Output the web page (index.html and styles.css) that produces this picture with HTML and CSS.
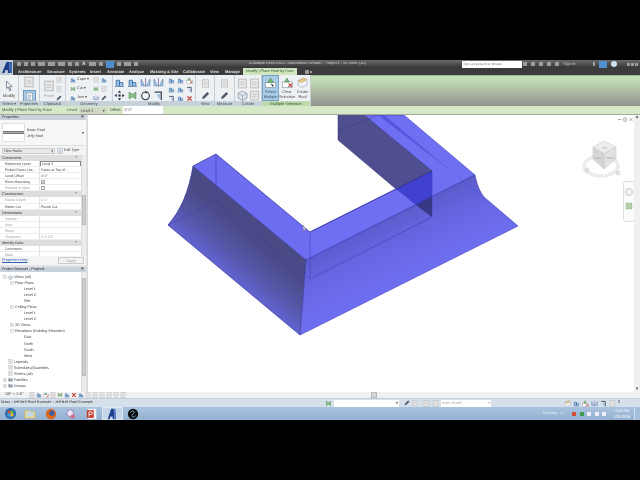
FILE: index.html
```html
<!DOCTYPE html>
<html lang="en">
<head>
<meta charset="utf-8">
<title>Autodesk Revit 2014</title>
<link rel="stylesheet" href="styles.css">
</head>
<body>
<svg class="defs" width="0" height="0">
  <symbol id="doc" viewBox="0 0 10 10"><rect x="1.5" y="1" width="7" height="8" fill="#fff" stroke="#8a96a3" stroke-width=".8"/><path d="M3 3.5h4M3 5.5h4M3 7.5h3" stroke="#6d86a8" stroke-width=".8"/></symbol>
  <symbol id="gray" viewBox="0 0 10 10"><rect x="1.5" y="1" width="7" height="8" fill="#e8e8e8" stroke="#b8b8b8" stroke-width=".8"/><path d="M3 4h4M3 6h4" stroke="#c4c4c4" stroke-width=".8"/></symbol>
  <symbol id="blue" viewBox="0 0 10 10"><path d="M1 8.5h8M2 8V3h3v5M5 8V5h3v3" fill="#9cc0e6" stroke="#3b6ea5" stroke-width=".8"/></symbol>
  <symbol id="green" viewBox="0 0 10 10"><path d="M2 2l3 2 3-2v6l-3-2-3 2z" fill="#8fc38a" stroke="#4f8a55" stroke-width=".7"/></symbol>
  <symbol id="move" viewBox="0 0 10 10"><path d="M5 .5l1.500 2h-3zM5 9.500l1.500-2h-3zM.5 5l2-1.500v3zM9.500 5l-2-1.500v3z" fill="#1f2f45"/><rect x="4" y="4" width="2" height="2" fill="#1f2f45"/></symbol>
  <symbol id="rotate" viewBox="0 0 10 10"><circle cx="5" cy="5.300" r="3.500" fill="none" stroke="#2c3a4a" stroke-width="1"/><path d="M5 .5l2 1.500-2 1.500z" fill="#2c3a4a"/></symbol>
  <symbol id="trim" viewBox="0 0 10 10"><path d="M1.500 2h6v7" fill="none" stroke="#33465c" stroke-width="1.200"/><path d="M4 4.500h1.500v3" fill="none" stroke="#6f9bc9" stroke-width="1"/></symbol>
  <symbol id="mirror" viewBox="0 0 10 10"><path d="M1 8V2l3 6zM9 8V2L6 8z" fill="#b9d2ec" stroke="#4b78aa" stroke-width=".6"/><path d="M5 1v8" stroke="#7b5ea8" stroke-width=".7"/></symbol>
  <symbol id="del" viewBox="0 0 10 10"><path d="M2 2l6 6M8 2L2 8" stroke="#c43a2e" stroke-width="1.700"/></symbol>
  <symbol id="pencil" viewBox="0 0 10 10"><path d="M1 9l1-3 5-5 2 2-5 5z" fill="#4b5a6b"/></symbol>
  <symbol id="box" viewBox="0 0 10 10"><path d="M1 3l4-2 4 2v4.500l-4 2-4-2z" fill="#dfe6ee" stroke="#7f8b98" stroke-width=".6"/><path d="M1 3l4 2 4-2M5 5v4.500" fill="none" stroke="#7f8b98" stroke-width=".5"/></symbol>
  <symbol id="sel" viewBox="0 0 10 10"><rect x=".5" y="5" width="9" height="4.500" fill="#fff" stroke="#7a8794" stroke-width=".5"/><path d="M2.500 5l2.500-4 2.500 4z" fill="#7dbb75" stroke="#3f7f49" stroke-width=".5"/><path d="M5 6l2 3 .6-1.200L9 8z" fill="#2b3c52"/></symbol>
  <symbol id="clear" viewBox="0 0 10 10"><rect x=".5" y="4.500" width="9" height="5" fill="#fff" stroke="#7a8794" stroke-width=".5"/><path d="M2.500 4.500l2-3.500 2 3.500z" fill="#7dbb75" stroke="#3f7f49" stroke-width=".5"/><path d="M6 6l3 3M9 6L6 9" stroke="#c43a2e" stroke-width="1.100"/></symbol>
  <symbol id="roof" viewBox="0 0 10 10"><path d="M1 3.500L6 1l3 1.500v5L4 9.500l-3-2z" fill="#f0f3f6" stroke="#8b98a5" stroke-width=".5"/><path d="M1 3.500L6 1l3 1.500L4 5z" fill="#e9c98b" stroke="#b48f4a" stroke-width=".4"/></symbol>
  <symbol id="plus" viewBox="0 0 10 10"><rect x="1.500" y="1.500" width="7" height="7" fill="#fff" stroke="#9aa4ae" stroke-width=".8"/><path d="M3 5h4M5 3v4" stroke="#5d6873" stroke-width=".9"/></symbol>
  <symbol id="minus" viewBox="0 0 10 10"><rect x="1.500" y="1.500" width="7" height="7" fill="#fff" stroke="#9aa4ae" stroke-width=".8"/><path d="M3 5h4" stroke="#5d6873" stroke-width=".9"/></symbol>
  <symbol id="folder" viewBox="0 0 10 10"><path d="M1 2.500h3l1 1h4v5H1z" fill="#99a2ac" stroke="#6f7882" stroke-width=".5"/></symbol>
</svg>

<div class="blackbar"></div>

<header class="head soft">
  <div class="logo"><svg viewBox="0 0 13 15" width="13" height="15"><rect width="13" height="15" fill="#c3ccd6"/><path d="M2 13L6.500 2H9L10 13H8L7.600 10H5.500L4.500 13z" fill="#1b3c86"/><path d="M9 2l1 11h2V2z" fill="#3b62b0"/></svg></div>
  <div class="head-main">
    <div class="titlebar">
      <div class="qat">
        <i class="q"></i><i class="q"></i><i class="q"></i><i class="q wide"></i><i class="q wide"></i><i class="q wide"></i><i class="q"></i><i class="q"></i><b class="qa">A</b><i class="q wide"></i><i class="q"></i><i class="q hi"></i><i class="q"></i><i class="q wide"></i><i class="q"></i>
      </div>
      <div class="title">Autodesk Revit 2014 - Educational Version -&nbsp; Project1 - 3D View: {3D}</div>
      <div class="search">Type a keyword or phrase</div>
      <div class="tools">
        <i class="q"></i><i class="q"></i><i class="q"></i><i class="q"></i><i class="q"></i><span class="signin">Sign In</span><i class="q push"></i><i class="q hi"></i><i class="q round"></i><span class="winbtns"><i class="q"></i><i class="q"></i><i class="q"></i></span>
      </div>
    </div>
    <nav class="tabs">
      <span class="tab t1">Architecture</span><span class="tab t2">Structure</span><span class="tab t3">Systems</span><span class="tab t4">Insert</span><span class="tab t5">Annotate</span><span class="tab t6">Analyze</span><span class="tab t7">Massing &amp; Site</span><span class="tab t8">Collaborate</span><span class="tab t9">View</span><span class="tab t10">Manage</span><span class="tab active">Modify | Place Roof by Face</span><span class="tab t12"><i class="q"></i><i class="q small"></i></span>
    </nav>
  </div>
</header>

<section class="ribbon soft">
  <div class="panel p-select"><div class="pbody col"><svg class="ic12" viewBox="0 0 10 10"><path d="M3 1l4.500 4.500H5.500l1 3-1 .4-1-3L3 7z" fill="#fff" stroke="#5d7088" stroke-width=".7"/></svg><span class="btxt">Modify</span></div><div class="plabel">Select ▾</div></div>
  <div class="panel p-props"><div class="pbody col"><svg class="ic12"><use href="#gray"/></svg><span class="hl"><svg class="ic9"><use href="#doc"/></svg></span></div><div class="plabel">Properties</div></div>
  <div class="panel p-clip"><div class="pbody row"><div class="col"><svg class="ic12"><use href="#gray"/></svg><span class="btxt dim">Paste</span></div><div class="col stack"><svg class="ic6"><use href="#gray"/></svg><svg class="ic6"><use href="#gray"/></svg><svg class="ic6"><use href="#pencil"/></svg></div></div><div class="plabel">Clipboard</div></div>
  <div class="panel p-geo"><div class="pbody row"><div class="col stack left"><span class="sm"><svg class="ic6"><use href="#blue"/></svg>Cope ▾</span><span class="sm"><svg class="ic6"><use href="#green"/></svg>Cut ▾</span><span class="sm"><svg class="ic6"><use href="#blue"/></svg>Join ▾</span></div><div class="g2"><svg class="ic6"><use href="#gray"/></svg><svg class="ic6"><use href="#blue"/></svg><svg class="ic6"><use href="#green"/></svg><svg class="ic6"><use href="#gray"/></svg><svg class="ic6"><use href="#mirror"/></svg><svg class="ic6"><use href="#pencil"/></svg></div></div><div class="plabel">Geometry</div></div>
  <div class="panel p-mod"><div class="pbody row"><div class="g4"><svg class="ic11"><use href="#blue"/></svg><svg class="ic11"><use href="#blue"/></svg><svg class="ic11"><use href="#mirror"/></svg><svg class="ic11"><use href="#mirror"/></svg><svg class="ic11"><use href="#move"/></svg><svg class="ic11"><use href="#green"/></svg><svg class="ic11"><use href="#rotate"/></svg><svg class="ic11"><use href="#trim"/></svg></div><div class="g3"><svg class="ic7"><use href="#blue"/></svg><svg class="ic7"><use href="#blue"/></svg><svg class="ic7"><use href="#clear"/></svg><svg class="ic7"><use href="#blue"/></svg><svg class="ic7"><use href="#blue"/></svg><svg class="ic7"><use href="#trim"/></svg><svg class="ic7"><use href="#trim"/></svg><svg class="ic7"><use href="#blue"/></svg><svg class="ic7"><use href="#del"/></svg></div></div><div class="plabel">Modify</div></div>
  <div class="panel p-view"><div class="pbody col stack"><svg class="ic9"><use href="#gray"/></svg><svg class="ic9"><use href="#pencil"/></svg></div><div class="plabel">View</div></div>
  <div class="panel p-meas"><div class="pbody col stack"><svg class="ic9"><use href="#gray"/></svg><svg class="ic9"><use href="#pencil"/></svg></div><div class="plabel">Measure</div></div>
  <div class="panel p-create"><div class="pbody g2b"><svg class="ic11"><use href="#gray"/></svg><svg class="ic11"><use href="#gray"/></svg><svg class="ic11"><use href="#box"/></svg><svg class="ic11"><use href="#gray"/></svg></div><div class="plabel">Create</div></div>
  <div class="panel p-multi"><div class="pbody row multi"><div class="mbtn on"><svg class="ic11"><use href="#sel"/></svg><span>Select<br>Multiple</span></div><div class="mbtn"><svg class="ic11"><use href="#clear"/></svg><span>Clear<br>Selection</span></div><div class="mbtn"><svg class="ic11"><use href="#roof"/></svg><span>Create<br>Roof</span></div></div><div class="plabel green">Multiple Selection</div></div>
  <div class="ribbon-rest"></div>
</section>

<div class="options soft">
  <span class="opt-title">Modify | Place Roof by Face</span>
  <span class="opt-l">Level:</span><span class="opt-sel">Level 2 <em>▾</em></span>
  <span class="opt-l off">Offset:</span><span class="opt-in">0' 0"</span>
</div>

<main class="main">
  <aside class="side soft">
    <section class="props">
      <div class="phead"><span>Properties</span><b>×</b></div>
      <div class="typesel">
        <div class="preview"><i></i></div>
        <div class="tname">Basic Roof<br>Jelly Roof</div>
        <em>▾</em>
      </div>
      <div class="filter"><span class="fsel">New Roofs<em>▾</em></span><span class="edit"><svg class="ic6"><use href="#doc"/></svg>Edit Type</span></div>
      <div class="grid-wrap">
        <div class="pgrid">
          <div class="ghead">Constraints<b>⌃</b></div>
          <div class="r"><span>Reference Level</span><span class="v box">Level 2</span></div>
          <div class="r"><span>Picked Faces Loc...</span><span class="v">Faces at Top of ...</span></div>
          <div class="r"><span>Level Offset</span><span class="v">0' 0"</span></div>
          <div class="r"><span>Room Bounding</span><span class="v"><i class="chk">✓</i></span></div>
          <div class="r dim"><span>Related to Mass</span><span class="v"><i class="chk"></i></span></div>
          <div class="ghead">Construction<b>⌃</b></div>
          <div class="r dim"><span>Fascia Depth</span><span class="v">0' 0"</span></div>
          <div class="r"><span>Rafter Cut</span><span class="v">Plumb Cut</span></div>
          <div class="ghead">Dimensions<b>⌃</b></div>
          <div class="r dim"><span>Volume</span><span class="v"></span></div>
          <div class="r dim"><span>Area</span><span class="v"></span></div>
          <div class="r dim"><span>Slope</span><span class="v"></span></div>
          <div class="r dim"><span>Thickness</span><span class="v">0' 4 1/2"</span></div>
          <div class="ghead">Identity Data<b>⌃</b></div>
          <div class="r"><span>Comments</span><span class="v"></span></div>
          <div class="r dim"><span>Mark</span><span class="v"></span></div>
        </div>
        <div class="sb"><i class="thumb t-props"></i></div>
      </div>
      <div class="pfoot"><a>Properties help</a><span class="apply">Apply</span></div>
    </section>
    <section class="browser">
      <div class="phead"><span>Project Browser - Project1</span><b>×</b></div>
      <div class="tree-wrap">
        <ul class="tree">
          <li class="l0"><svg class="ex"><use href="#minus"/></svg><svg class="ti"><use href="#box"/></svg>Views (all)</li>
          <li class="l1"><svg class="ex"><use href="#minus"/></svg>Floor Plans</li>
          <li class="l2">Level 1</li>
          <li class="l2">Level 2</li>
          <li class="l2">Site</li>
          <li class="l1"><svg class="ex"><use href="#minus"/></svg>Ceiling Plans</li>
          <li class="l2">Level 1</li>
          <li class="l2">Level 2</li>
          <li class="l1"><svg class="ex"><use href="#plus"/></svg>3D Views</li>
          <li class="l1"><svg class="ex"><use href="#minus"/></svg>Elevations (Building Elevation)</li>
          <li class="l2">East</li>
          <li class="l2">North</li>
          <li class="l2">South</li>
          <li class="l2">West</li>
          <li class="l0b"><svg class="ti"><use href="#gray"/></svg>Legends</li>
          <li class="l0b"><svg class="ti"><use href="#gray"/></svg>Schedules/Quantities</li>
          <li class="l0b"><svg class="ti"><use href="#gray"/></svg>Sheets (all)</li>
          <li class="l0"><svg class="ex"><use href="#plus"/></svg><svg class="ti"><use href="#folder"/></svg>Families</li>
          <li class="l0"><svg class="ex"><use href="#plus"/></svg><svg class="ti"><use href="#folder"/></svg>Groups</li>
        </ul>
        <div class="sb"><i class="thumb t-tree"></i></div>
      </div>
    </section>
  </aside>

  <div class="view">
    <svg class="model" viewBox="87 116 547 276" width="547" height="276">
      <defs>
        <linearGradient id="gLeft" gradientUnits="userSpaceOnUse" x1="230" y1="285" x2="262" y2="247"><stop offset="0" stop-color="#6666dc"/><stop offset=".5" stop-color="#5656a8"/><stop offset="1" stop-color="#4a4a86"/></linearGradient>
        <linearGradient id="gLow" gradientUnits="userSpaceOnUse" x1="360" y1="225" x2="395" y2="300"><stop offset="0" stop-color="#5a5ac8"/><stop offset=".45" stop-color="#6868e6"/><stop offset="1" stop-color="#7070f4"/></linearGradient>
      </defs>
      <path d="M363 116H403L474 176 305 261 309 233 431 172z" fill="#6f6ff4" stroke="#3535a8" stroke-width=".5"/>
      <path d="M305 261L474 176C476 186 479 193 483 198L517 227 299 336z" fill="url(#gLow)"/>
      <path d="M299 336L517 227 483 198C479 193 476 186 474 176" fill="none" stroke="#3d3db8" stroke-width=".6"/>
      <path d="M383 116L480 197 476 192 377 116z" fill="#5656dc"/>
      <path d="M337 116H363L431 172 395 190 337 141z" fill="#4f4f8f"/>
      <path d="M337 116V141L395 190M363 116L431 172 395 190" fill="none" stroke="#2d2d78" stroke-width=".5"/>
      <path d="M337 132L377 116" stroke="#33337c" stroke-width=".4"/>
      <path d="M395 190L431 172V197L415 206z" fill="#4141cf"/>
      <path d="M415 206L431 197V218z" fill="#383884"/>
      <path d="M431 172V218L309 280V233" fill="none" stroke="#3b3bb4" stroke-width=".5"/>
      <path d="M192 167C188 192 180 211 167 226L299 336 305 261z" fill="url(#gLeft)"/>
      <path d="M192 167L215 155 309 233 305 261z" fill="#6d6df2"/>
      <path d="M192 167L215 155 309 233 431 172M192 167L305 261 299 336 167 226C180 211 188 192 192 167z" fill="none" stroke="#2f2f9c" stroke-width=".7"/>
      <path d="M305 261L474 176" fill="none" stroke="#2f2fa8" stroke-width=".6"/>
      <path d="M215 155V202M167 226L215 202 309 280" fill="none" stroke="#35359a" stroke-width=".4"/>
      <path d="M302 226l3 5-1.500-.3-.7 2z" fill="#e8e8f0" stroke="#555" stroke-width=".3"/>
      <ellipse class="ring" cx="600" cy="167" rx="17" ry="10"/>
      <path d="M603 142L615 148 603 155 592 148z" fill="#ededed" stroke="#bbb" stroke-width=".4"/>
      <path d="M592 148L603 155V170L592 160z" fill="#d6d6d6" stroke="#bbb" stroke-width=".4"/>
      <path d="M603 155L615 148V160L603 170z" fill="#e2e2e2" stroke="#bbb" stroke-width=".4"/>
      <text class="cube" x="601" y="150">TOP</text>
      <text class="cube" x="594" y="160">LEFT</text>
      <text class="cube" x="605" y="160">FRONT</text>
      <circle cx="586" cy="171" r="2" fill="#e4e4e4" stroke="#bbb" stroke-width=".4"/>
      <circle cx="617" cy="174" r="2" fill="#e4e4e4" stroke="#bbb" stroke-width=".4"/>
      <rect x="622.500" y="182.500" width="11" height="40" rx="2" fill="#fbfbfb" stroke="#d4d4d4" stroke-width=".8"/>
      <circle cx="628" cy="193" r="3.500" fill="#f2f2f2" stroke="#bbb" stroke-width=".8"/>
      <rect x="625" y="204" width="6" height="6" fill="#b4d0ac" stroke="#8fb28a" stroke-width=".4"/>
      <path d="M617 120.500h3" stroke="#aaa" stroke-width="1"/>
      <circle cx="624" cy="120.500" r="2" fill="#ddd" stroke="#aaa" stroke-width=".6"/>
      <path d="M628.500 119l3 3M631.500 119l-3 3" stroke="#999" stroke-width=".8"/>
    </svg>
  </div>
  <div class="vscroll"><em>▴</em><em>▾</em></div>
</main>

<div class="strip soft">
  <div class="vcb"><span>1/8" = 1'-0"</span><svg class="ic6"><use href="#gray"/></svg><svg class="ic6"><use href="#blue"/></svg><svg class="ic6"><use href="#clear"/></svg><svg class="ic6"><use href="#gray"/></svg><svg class="ic6"><use href="#green"/></svg><svg class="ic6"><use href="#blue"/></svg><svg class="ic6"><use href="#del"/></svg><svg class="ic6"><use href="#blue"/></svg><svg class="ic6"><use href="#gray"/></svg><svg class="ic6"><use href="#gray"/></svg><svg class="ic6"><use href="#gray"/></svg><svg class="ic6"><use href="#gray"/></svg><svg class="ic6"><use href="#gray"/></svg><svg class="ic6"><use href="#gray"/></svg></div>
  <div class="hscroll"><i></i></div>
</div>

<div class="status soft">
  <span class="st-text">Mass : Jeff Bell Roof Example : Jeff Bell Roof Example</span>
  <svg class="ic7"><use href="#green"/></svg>
  <span class="st-in"><em>▾</em></span>
  <span class="st-ics"><svg class="ic6"><use href="#pencil"/></svg><svg class="ic6"><use href="#gray"/></svg></span>
  <span class="st-ics two"><svg class="ic7"><use href="#gray"/></svg><svg class="ic7"><use href="#gray"/></svg></span>
  <span class="st-model">Main Model<em>▾</em></span>
  <span class="st-right"><svg class="ic7"><use href="#roof"/></svg><svg class="ic7"><use href="#blue"/></svg><svg class="ic7"><use href="#clear"/></svg><svg class="ic7"><use href="#mirror"/></svg><svg class="ic7"><use href="#trim"/></svg><svg class="ic7"><use href="#gray"/></svg><span>0</span></span>
</div>

<footer class="taskbar soft">
  <div class="tb orb"><svg viewBox="0 0 14 14" width="13" height="13"><circle cx="7" cy="7" r="6" fill="#2e6fb3"/><path d="M4 4h3v3H4z" fill="#d9502e"/><path d="M7 4h3v3H7z" fill="#7cb93f"/><path d="M4 7h3v3H4z" fill="#3f9fe0"/><path d="M7 7h3v3H7z" fill="#f0c02e"/></svg></div>
  <div class="tb"><svg viewBox="0 0 14 14" width="12" height="12"><path d="M1 3h5l1 1.500h6V12H1z" fill="#ecd98a" stroke="#b8a45a" stroke-width=".5"/><path d="M3 5h8v5H3z" fill="#bcd8ec"/></svg></div>
  <div class="tb"><svg viewBox="0 0 14 14" width="12" height="12"><circle cx="7" cy="7" r="6" fill="#e0661c"/><circle cx="8" cy="6" r="3" fill="#3a5ea8"/></svg></div>
  <div class="tb"><svg viewBox="0 0 14 14" width="12" height="12"><circle cx="6" cy="6" r="4" fill="#e8e4f2" stroke="#9c6fb8"/><circle cx="9" cy="10" r="2.500" fill="#d86a8a"/></svg></div>
  <div class="tb"><svg viewBox="0 0 14 14" width="12" height="12"><rect x="2" y="1" width="10" height="12" fill="#f4f4f4"/><rect x="1" y="2.500" width="8" height="9" fill="#c6392a"/><path d="M3.500 10V4.500h2.500a1.500 1.500 0 010 3H3.500" fill="none" stroke="#fff" stroke-width="1"/></svg></div>
  <div class="tb lit"><svg viewBox="0 0 14 14" width="12" height="12"><path d="M2 13L6 1h3l1 12H8l-.4-3H5.200L4 13z" fill="#1f3f8f"/><path d="M9 1l1 12h2L11 1z" fill="#4d78c4"/></svg></div>
  <div class="tb"><svg viewBox="0 0 14 14" width="12" height="12"><circle cx="7" cy="7" r="6" fill="#0d0d0d"/><path d="M4 5c3-3 6-1 3 2s0 5 3 2" fill="none" stroke="#7ac0e0" stroke-width="1"/></svg></div>
  <div class="tray">
    <span class="desk">Desktop</span><em>»</em><span class="t-ic red"></span><span class="t-ic grn"></span><span class="t-ic wht"></span><span class="t-ic wht2"></span><span class="t-ic wht"></span>
    <div class="clock">3:23 PM<br>1/31/2018</div>
    <span class="showd"></span>
  </div>
</footer>

<div class="blackbar bottom"></div>
</body>
</html>
```

FILE: styles.css
```css
* { box-sizing: border-box; }
html, body { margin: 0; padding: 0; background: #000; }
body { width: 640px; height: 480px; overflow: hidden; font: 4px/1 "Liberation Sans", Arial, sans-serif; color: #444; text-rendering: geometricPrecision; }
i, em, b { font-style: normal; }
.defs { position: absolute; }
.soft { filter: blur(.3px); }
.blackbar { height: 60px; background: #000; }
.ic6, .ic7, .ic9, .ic11, .ic12 { display: block; flex: none; }
.ic6 { width: 6px; height: 6px; }
.ic7 { width: 7px; height: 7px; }
.ic9 { width: 9px; height: 9px; }
.ic11 { width: 11px; height: 11px; }
.ic12 { width: 12px; height: 12px; }

/* header */
.head { display: flex; height: 15px; background: #3a3a3a; }
.logo { width: 13px; flex: none; }
.logo svg { display: block; }
.head-main { flex: 1; min-width: 0; display: flex; flex-direction: column; }
.titlebar { height: 8px; display: flex; align-items: center; background: linear-gradient(#6b6b6b, #353535); }
.qat { display: flex; align-items: center; gap: 3px; width: 236px; padding-left: 4px; flex: none; }
.q { display: block; width: 4px; height: 4px; background: #b4b8bc; opacity: .75; flex: none; }
.q.wide { width: 7px; }
.q.hi { width: 8px; height: 7px; background: #4f8fd0; opacity: 1; }
.q.round { width: 6px; height: 6px; border-radius: 50%; background: #cfe0f0; opacity: 1; }
.qa { font-size: 5px; color: #ddd; }
.title { width: 213px; flex: none; font-size: 3.800px; color: #d0d0d0; white-space: nowrap; overflow: hidden; }
.search { width: 60px; height: 7px; flex: none; background: #fff; color: #777; font-size: 3.400px; line-height: 7px; padding-left: 1px; overflow: hidden; white-space: nowrap; }
.tools { flex: 1; min-width: 0; display: flex; align-items: center; gap: 4px; padding: 0 2px 0 1px; }
.signin { color: #ccc; font-size: 4px; white-space: nowrap; }
.push { margin-left: 14px; width: 2px; }
.winbtns { display: flex; gap: 1px; margin-left: 6px; }
.winbtns .q { width: 3px; height: 3px; }

.tabs { height: 7px; display: flex; align-items: stretch; background: #3c3c3c; color: #e0e0e0; font-size: 4px; font-weight: bold; line-height: 7px; }
.tab { display: block; flex: none; white-space: nowrap; }
.t1 { margin-left: 5px; width: 29px; }
.t2 { width: 22px; }
.t3 { width: 21px; }
.t4 { width: 17px; }
.t5 { width: 22px; }
.t6 { width: 21px; }
.t7 { width: 33px; }
.t8 { width: 27px; }
.t9 { width: 15px; }
.t10 { width: 18px; }
.tab.active { width: 54px; background: #cfe6bf; color: #35502f; text-align: center; font-weight: normal; font-size: 3.800px; }
.t12 { display: flex; align-items: center; gap: 1px; margin-left: 8px; }
.q.small { width: 2px; height: 2px; }

/* ribbon */
.ribbon { height: 31px; display: flex; background: #eef1f4; }
.panel { display: flex; flex-direction: column; flex: none; border-right: 1px solid #c8ced4; }
.pbody { flex: 1; min-height: 0; padding-top: 2px; display: flex; justify-content: center; align-items: center; gap: 1px; }
.col { flex-direction: column; display: flex; align-items: center; gap: 2px; }
.row { flex-direction: row; display: flex; }
.stack { gap: 3px; }
.left { align-items: flex-start; }
.plabel { height: 5px; line-height: 5px; background: #c7d1da; color: #444c54; text-align: center; font-size: 4px; white-space: nowrap; }
.plabel.green { background: #bddcae; color: #3a5434; }
.btxt { font-size: 4.200px; color: #444; }
.btxt.dim { color: #aaa; }
.hl { display: block; width: 13px; height: 12px; background: #a9c9e8; border: 1px solid #6f97bf; padding: 1px; }
.sm { display: flex; align-items: center; gap: 1px; font-size: 3.800px; color: #444; white-space: nowrap; }
.p-select { width: 19px; }
.p-props { width: 21px; }
.p-clip { width: 26px; }
.p-geo { width: 47px; }
.p-mod { width: 83px; }
.p-view { width: 19px; }
.p-meas { width: 20px; }
.p-create { width: 27px; }
.p-multi { width: 49px; }
.g2 { display: grid; grid-template-columns: 7px 7px; gap: 3px 1px; margin-left: 3px; }
.g2b { display: grid; grid-template-columns: 11px 11px; gap: 1px; justify-content: center; align-content: center; }
.g3 { display: grid; grid-template-columns: repeat(3, 8px); gap: 2px 1px; margin-left: 3px; }
.g4 { display: grid; grid-template-columns: repeat(4, 11px); gap: 2px; }
.multi { gap: 0; align-items: stretch; padding-top: 0; }
.mbtn { flex: 1; display: flex; flex-direction: column; align-items: center; gap: 1px; padding-top: 2px; text-align: center; font-size: 3.900px; line-height: 5px; color: #444; white-space: nowrap; }
.mbtn.on { background: #a9cbe6; border: 1px solid #7ba3c7; color: #34506c; padding-top: 1px; }
.ribbon-rest { flex: 1; background: linear-gradient(#c6e1b7 0, #bcd3ad 25%, #989c94 90%, #8f938c 100%); border-top: 1px solid #9db894; }

/* options */
.options { height: 9px; display: flex; align-items: center; background: #d7e8c9; border-bottom: 1px solid #a5a89a; color: #45543e; font-size: 4px; white-space: nowrap; }
.opt-title { width: 67px; padding-left: 2px; flex: none; }
.opt-l { margin-right: 1px; }
.opt-sel { width: 28px; height: 7px; line-height: 7px; flex: none; display: flex; justify-content: space-between; padding: 0 2px; background: #cfd9c4; color: #444; }
.off { margin-left: 3px; }
.opt-in { width: 40px; height: 8px; line-height: 8px; background: #fff; flex: none; padding-left: 1px; color: #555; margin-left: 1px; }

/* main */
.main { height: 277px; display: flex; background: #fff; }
.side { width: 87px; flex: none; display: flex; flex-direction: column; gap: 2px; background: #e4e4e4; padding-right: 1px; }
.phead { height: 5px; display: flex; justify-content: space-between; align-items: center; padding: 0 2px; background: #c9d3dd; color: #2c2c2c; font-size: 3.700px; flex: none; }
.phead b { font-size: 5px; }
.props { height: 150px; flex: none; display: flex; flex-direction: column; background: #f4f4f4; }
.typesel { height: 26px; flex: none; display: flex; align-items: center; padding: 3px 2px; gap: 1px; background: #f7f7f7; border-bottom: 1px solid #ddd; }
.preview { width: 23px; height: 19px; flex: none; background: #fff; border: 1px solid #e0e0e0; display: flex; align-items: center; }
.preview i { display: block; width: 100%; height: 3px; background: #aaa; border-top: 1px solid #777; border-bottom: 1px solid #777; }
.tname { flex: 1; padding-left: 1px; font-size: 3.700px; line-height: 6px; color: #444; }
.typesel em { font-size: 4px; }
.filter { height: 9px; flex: none; display: flex; align-items: center; gap: 2px; padding: 0 2px; background: #f4f4f4; }
.fsel { width: 53px; height: 6px; display: flex; justify-content: space-between; padding: 0 1px; flex: none; background: #e9e9e9; border: 1px solid #ccc; line-height: 4px; font-size: 3.700px; }
.edit { display: flex; align-items: center; gap: 1px; font-size: 3.700px; white-space: nowrap; }
.grid-wrap { flex: 1; min-height: 0; display: flex; overflow: hidden; }
.pgrid { flex: 1; min-width: 0; overflow: hidden; background: #fff; }
.ghead { height: 6px; line-height: 6px; display: flex; justify-content: space-between; padding: 0 3px 0 2px; background: #dedede; color: #333; font-size: 3.800px; }
.r { height: 6.100px; display: grid; grid-template-columns: 40px 1fr; line-height: 6px; color: #444; font-size: 3.500px; border-bottom: 1px solid #ececec; white-space: nowrap; overflow: hidden; }
.r > span:first-child { padding-left: 5px; border-right: 1px solid #e2e2e2; }
.r .v { padding-left: 1px; }
.r .box { border: 1px solid #888; line-height: 4px; }
.r.dim { color: #999; }
.chk { display: block; width: 4px; height: 4px; margin-top: 1px; border: 1px solid #aaa; font-size: 3px; line-height: 3px; background: #eee; }
.sb { width: 5px; flex: none; background: #ececec; border-left: 1px solid #ddd; }
.thumb { display: block; width: 4px; background: #cfcfcf; border: 1px solid #bbb; }
.t-props { height: 30px; margin-top: 40px; }
.t-tree { height: 98px; margin-top: 6px; }
.pfoot { height: 9px; flex: none; display: flex; justify-content: space-between; align-items: center; padding: 0 2px; background: #f4f4f4; font-size: 3.800px; }
.pfoot a { color: #2b5fb0; text-decoration: underline; }
.apply { width: 26px; height: 7px; line-height: 6px; text-align: center; background: #f2f2f2; border: 1px solid #ccc; color: #aaa; }

.browser { flex: 1; min-height: 0; display: flex; flex-direction: column; background: #fff; }
.tree-wrap { flex: 1; min-height: 0; display: flex; }
.tree { flex: 1; min-width: 0; margin: 0; padding: 2px 0 0; list-style: none; color: #444; font-size: 3.700px; overflow: hidden; }
.tree li { height: 6.050px; line-height: 6px; display: flex; align-items: center; gap: 1px; white-space: nowrap; }
.ex { width: 4px; height: 4px; flex: none; }
.ti { width: 5px; height: 5px; flex: none; }
.l0 { padding-left: 3px; }
.l0b { padding-left: 8px; }
.l1 { padding-left: 10px; }
.l2 { padding-left: 24px; }

/* view */
.view { width: 547px; flex: none; background: #fff; position: relative; overflow: hidden; border-left: 1px solid #d8d8d8; }
.model { display: block; }
.ring { fill: none; stroke: #ececec; stroke-width: 3.500; }
.cube { font-size: 2.500px; fill: #999; }
.vscroll { flex: 1; display: flex; flex-direction: column; justify-content: space-between; align-items: center; background: #f0f0f0; color: #555; font-size: 5px; }

/* bottom */
.strip { height: 6px; display: flex; background: #f0f0f0; }
.vcb { width: 124px; flex: none; display: flex; align-items: center; gap: 1px; padding-left: 5px; background: #f2f2f2; border-right: 1px solid #ddd; font-size: 3.800px; white-space: nowrap; color: #444; }
.vcb span { margin-right: 4px; }
.hscroll { flex: 1; display: flex; align-items: stretch; padding-left: 247px; }
.hscroll i { display: block; width: 6px; background: #d4d4d4; border: 1px solid #bbb; }
.status { height: 9px; display: flex; align-items: center; background: #d6e0ea; border-top: 1px solid #c5ced8; color: #333; font-size: 3.800px; white-space: nowrap; }
.st-text { width: 325px; flex: none; padding-left: 1px; }
.st-in { width: 65px; height: 7px; margin-left: 2px; flex: none; background: #fff; display: flex; justify-content: flex-end; padding-right: 1px; line-height: 7px; }
.st-ics { display: flex; gap: 2px; margin-left: 5px; }
.st-ics.two { margin-left: 5px; }
.st-model { width: 50px; height: 7px; margin-left: 2px; line-height: 7px; flex: none; background: #fff; color: #aaa; display: flex; justify-content: space-between; padding: 0 1px; }
.st-right { display: flex; align-items: center; gap: 2px; margin-left: 73px; }
.taskbar { height: 13px; display: flex; align-items: center; background: linear-gradient(#a9c3de, #94b2d2); color: #fff; }
.tb { width: 20.500px; height: 13px; flex: none; display: flex; align-items: center; justify-content: center; }
.tb.orb { width: 20px; }
.tb.lit { background: #c4d6e8; border: 1px solid #dde8f2; }
.tray { flex: 1; display: flex; align-items: center; justify-content: flex-end; gap: 3.500px; height: 13px; font-size: 3.800px; }
.desk { color: #eaf0f6; }
.tray em { color: #fff; margin-right: 6px; }
.t-ic { display: block; width: 4px; height: 4px; background: #eef; }
.t-ic.red { background: #d24a3a; }
.t-ic.grn { background: #3f9a4a; }
.clock { text-align: center; line-height: 6px; color: #fff; margin-left: 4px; }
.showd { display: block; width: 6px; height: 13px; background: #a4bfdc; border-left: 1px solid #cfdeee; }
```
